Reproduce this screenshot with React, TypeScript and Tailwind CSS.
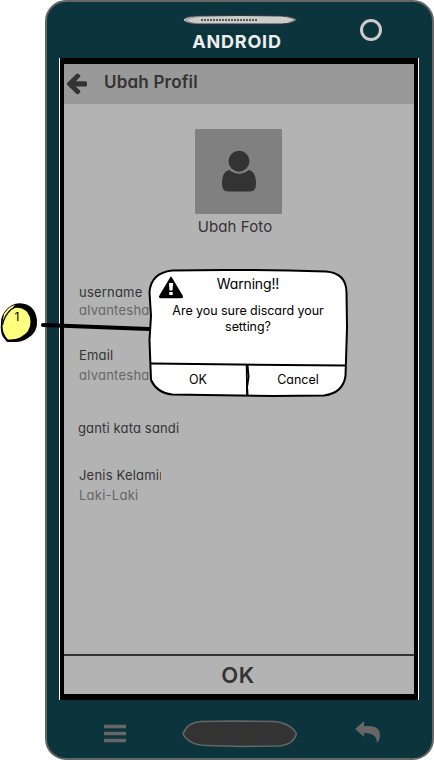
import React from "react";

function Speaker() {
  return (
    <svg className="block h-[12px] w-[116px]" viewBox="0 0 116 12" fill="none">
      <path d="M1 6Q4 2 14 2L58 1.500L100 2Q111 3 114.500 6Q110 9.500 100 10H14Q4 9.500 1 6Z" fill="#ccc" stroke="#333" strokeWidth="1" />
      <path d="M17 2.500Q7 3.500 4 6Q7 9 15 9.500M104 2.500L114 5.500L106 9" stroke="#777" strokeWidth="0.8" />
      <path d="M19 6H76" stroke="#333" strokeWidth="1.4" strokeDasharray="2 1" />
    </svg>
  );
}

function ArrowLeft() {
  return (
    <svg className="-mt-[2px] block h-[24px] w-[21px] shrink-0" viewBox="0 0 1536 1792" preserveAspectRatio="none">
      <path
        fill="#333"
        d="M1536 896v128q0 53-32.5 90.5t-84.5 37.5h-704l293 294q38 36 38 90t-38 90l-75 76q-37 37-90 37-52 0-91-37l-651-652q-37-37-37-90 0-52 37-91l651-650q38-38 91-38 52 0 90 38l75 74q38 38 38 91t-38 91l-293 293h704q52 0 84.5 37.5t32.5 90.5z"
      />
    </svg>
  );
}

function UserIcon() {
  return (
    <svg className="-mt-[2px] block h-[42px] w-[36px]" viewBox="0 0 36 42">
      <path d="M8.5 20Q1 21 1 34Q1 41.5 7 41.5H29Q35 41.5 35 34Q35 21 27.5 20Q23 23.8 18 23.8T8.5 20Z" fill="#333" />
      <circle cx="18" cy="11.2" r="10.5" fill="#333" />
    </svg>
  );
}

function Field({ label, value }: { label: string; value: string }) {
  return (
    <div>
      <div className="h-[20px] w-[82px] overflow-hidden whitespace-nowrap tracking-[0.2px] text-[#333]">{label}</div>
      <div className="h-[18px] whitespace-nowrap tracking-[0.25px] text-[#666]">{value}</div>
    </div>
  );
}

function Dialog() {
  return (
    <div className="absolute left-[148px] top-[268px] h-[129px] w-[200px] text-[13px] text-black">
      <svg className="absolute inset-0 h-full w-full" viewBox="0 0 200 129" fill="none">
        <path
          d="M24 2.5Q90 1 178 3.5Q198 5 198.500 24L199 60L197.500 108Q195 125 176 127.500L125 128L24 126.500Q9 125 3 112L1.500 72L3 48L1.500 24Q3 5 24 2.500Z"
          fill="#fff"
          stroke="#000"
          strokeWidth="2"
        />
        <path d="M3 95.500L90 96.500L197 97.500M99.500 97L100.500 109L99 119L99.500 127" stroke="#000" strokeWidth="2" />
        <path d="M98.500 97L99 127" stroke="#000" strokeWidth="1.500" />
        <path d="M23 9.500L34 28Q35 29.500 33 29.500H13Q11 29.500 12 28Z" fill="#000" stroke="#000" strokeWidth="1.500" strokeLinejoin="round" />
        <path d="M21 15H25L24.500 22.500H21.500ZM21.300 24H24.700V27H21.300Z" fill="#fff" />
      </svg>
      <div className="relative flex h-full flex-col">
        <div className="mt-[6px] h-[20px] text-center text-[14px] leading-[20px] tracking-[-0.15px]">Warning!!</div>
        <div className="mt-[9px] h-[61px] text-center text-[12.5px] leading-[16px] tracking-[-0.05px]">
          Are you sure discard your
          <br />
          setting?
        </div>
        <div className="grid h-[31px] grid-cols-2 text-center text-[12.5px] leading-[31px]">
          <span>OK</span>
          <span>Cancel</span>
        </div>
      </div>
    </div>
  );
}

function Marker() {
  return (
    <div className="absolute left-0 top-[300px] h-[46px] w-[150px]">
      <svg className="absolute inset-0 h-full w-full" viewBox="0 0 150 46" fill="none">
        <path d="M6 10Q12 3 20 3.300Q35 4 37 20Q38 32 28 38Q22 42 16 42H7L3 37Q0 32 1 22Q1 16 6 10Z" fill="#000" />
        <path d="M4 14Q9 6 15 5Q13 8 11 9Q16 7 22 8.500Q30 12 30.500 21Q31 32 20 37.500Q15 40 8 39.500Q2.500 34 2.500 26Q2.500 20 4 14Z" fill="#ffff80" />
        <path d="M2.500 25Q4 16 11 9.500L17 6" stroke="#000" strokeWidth="1.300" />
        <path d="M43 25L149 29" stroke="#000" strokeWidth="4" strokeLinecap="round" />
      </svg>
      <div className="relative w-[34px] pt-[9px] text-center text-[12px] leading-[16px]">1</div>
    </div>
  );
}

export default function App() {
  return (
    <main className="relative h-[760px] w-[434px] overflow-hidden bg-white font-['Inter',sans-serif] [font-feature-settings:'cv11']">
      <div className="ml-[45px] flex h-[760px] w-[389px] flex-col rounded-[21px] border-2 border-[#666] bg-[#0c343d]">
        <header className="relative flex h-[56px] flex-col items-center pt-[12px]">
          <Speaker />
          <div className="mr-[5px] mt-[4px] text-[18px] font-bold leading-[24px] tracking-[0.8px] text-[#eee]">ANDROID</div>
          <div className="absolute left-[313px] top-[17px] h-[22px] w-[22px] rounded-full border-3 border-[#ccc]" />
        </header>
        <div className="ml-[12px] flex h-[642px] w-[360px] shrink-0 border-x border-white bg-black">
          <section className="flex w-full flex-col border-x-4 border-y-6 border-black bg-[#b3b3b3]">
            <div className="flex h-[40px] shrink-0 items-center bg-[#999] pl-[2px]">
              <ArrowLeft />
              <h1 className="ml-[17px] pb-[3px] text-[17px] font-semibold tracking-[0.2px] text-[#333]">Ubah Profil</h1>
            </div>
            <div className="flex h-[178px] flex-col items-center pt-[25px]">
              <div className="mr-px flex h-[85px] w-[87px] items-center justify-center rounded-[1px] bg-[#808080]">
                <UserIcon />
              </div>
              <div className="mr-[8px] mt-[3px] text-[15px] leading-[20px] tracking-[0.1px] text-[#333]">Ubah Foto</div>
            </div>
            <div className="flex flex-1 flex-col pl-[15px] pt-px text-[13px] leading-[18px]">
              <div className="-mb-[2px]">
                <div className="h-[18px] tracking-[0.2px] text-[#333]">username</div>
                <div className="h-[20px] tracking-[0.25px] text-[#666]">alvantesha</div>
              </div>
              <div className="h-[27px]" />
              <Field label="Email" value="alvantesha" />
              <div className="-ml-px mt-[35px] tracking-[0.15px] text-[#333]">ganti kata sandi</div>
              <div className="h-[29px]" />
              <Field label="Jenis Kelamin" value="Laki-Laki" />
            </div>
            <div className="flex h-[40px] items-center justify-center border-t-2 border-[#333] pr-[2px] text-[22px] font-semibold tracking-[0.5px] text-[#333]">OK</div>
          </section>
        </div>
        <nav className="flex flex-1 items-center pt-[9px]">
          <svg className="ml-[57px] h-[19px] w-[22px]" viewBox="0 0 22 19">
            <path d="M0 2.500H22M0 9.500H22M0 16.500H22" stroke="#666" strokeWidth="3.500" />
          </svg>
          <svg className="ml-[56px] h-[28px] w-[116px]" viewBox="0 0 116 28">
            <path d="M1 14Q5 2.500 19 1.500L50 1L92 1.500Q109 3 114.500 14Q111 25 97 26L60 26.500L24 25.500Q7 25 1 14Z" fill="#333" stroke="#666" strokeWidth="1.500" />
          </svg>
          <svg className="-mt-[2px] ml-[57px] h-[23px] w-[26px]" viewBox="0 0 26 23">
            <path d="M0 8L9 0V5H13Q25 5 25 14Q25 19 22 22Q22 12 9 12V16Z" fill="#666" />
          </svg>
        </nav>
      </div>
      <Marker />
      <Dialog />
    </main>
  );
}
